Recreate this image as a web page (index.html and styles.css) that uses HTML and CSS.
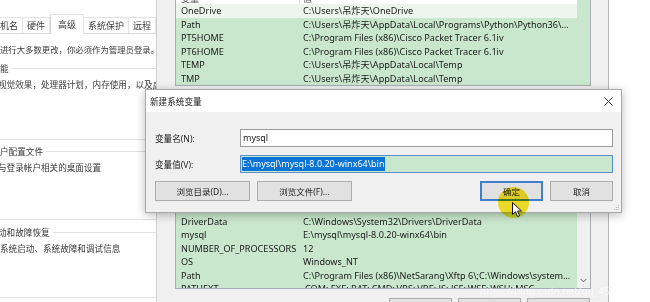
FILE: index.html
```html
<!DOCTYPE html>
<html>
<head>
    <title>新建系统变量</title>
    <link rel="stylesheet" href="styles.css">
</head>
<body>

    <div class="screen">
        <!-- system properties window, advanced tab -->
        <div class="sysprops">
            <div class="tabs">
                <div class="tab tab-first">计算机名</div>
                <div class="tab">硬件</div>
                <div class="tab active">高级</div>
                <div class="tab">系统保护</div>
                <div class="tab">远程</div>
            </div>
            <p class="note">进行大多数更改，你必须作为管理员登录。</p>
            <div class="group-head g1"><span>能</span><i></i></div>
            <p class="desc cut">视觉效果，处理器计划，内存使用，以及虚拟内存</p>
            <div class="group-end e1"></div>
            <div class="group-head g2"><span>户配置文件</span><i></i></div>
            <p class="desc cut">与登录帐户相关的桌面设置</p>
            <div class="group-end e2"></div>
            <div class="group-head g3"><span class="cut">动和故障恢复</span><i></i></div>
            <p class="desc">系统启动、系统故障和调试信息</p>
            <div class="group-end e3"></div>
        </div>

        <!-- environment variables window -->
        <div class="envwin">
            <div class="list list-top">
                <div class="list-head"><span class="name">变量</span><span class="val">值</span></div>
                <div class="row hover"><span class="name">OneDrive</span><span class="val">C:\Users\吊炸天\OneDrive</span></div>
                <div class="row"><span class="name">Path</span><span class="val">C:\Users\吊炸天\AppData\Local\Programs\Python\Python36\Scripts\;C:\Users</span></div>
                <div class="row"><span class="name">PT5HOME</span><span class="val">C:\Program Files (x86)\Cisco Packet Tracer 6.1iv</span></div>
                <div class="row"><span class="name">PT6HOME</span><span class="val">C:\Program Files (x86)\Cisco Packet Tracer 6.1iv</span></div>
                <div class="row"><span class="name">TEMP</span><span class="val">C:\Users\吊炸天\AppData\Local\Temp</span></div>
                <div class="row"><span class="name">TMP</span><span class="val">C:\Users\吊炸天\AppData\Local\Temp</span></div>
            </div>

            <div class="list-gap"></div>

            <div class="list list-bottom">
                <div class="list-body">
                    <div class="list-head"><span class="name">变量</span><span class="val">值</span></div>
                    <div class="row"><span class="name">asl.log</span><span class="val">Destination=file</span></div>
                    <div class="row"><span class="name">CLASSPATH</span><span class="val">.;%JAVA_HOME%\lib</span></div>
                    <div class="row"><span class="name">ComSpec</span><span class="val">C:\Windows\system32\cmd.exe</span></div>
                    <div class="row"><span class="name">configsetroot</span><span class="val">C:\Windows\ConfigSetRoot</span></div>
                    <div class="row"><span class="name">CUDA_PATH</span><span class="val">C:\Program Files\NVIDIA GPU Computing Toolkit</span></div>
                    <div class="row"><span class="name">DriverData</span><span class="val">C:\Windows\System32\Drivers\DriverData</span></div>
                    <div class="row"><span class="name">mysql</span><span class="val">E:\mysql\mysql-8.0.20-winx64\bin</span></div>
                    <div class="row"><span class="name">NUMBER_OF_PROCESSORS</span><span class="val">12</span></div>
                    <div class="row"><span class="name">OS</span><span class="val">Windows_NT</span></div>
                    <div class="row"><span class="name">Path</span><span class="val">C:\Program Files (x86)\NetSarang\Xftp 6\;C:\Windows\system32;C:\Windows</span></div>
                    <div class="row"><span class="name">PATHEXT</span><span class="val">.COM;.EXE;.BAT;.CMD;.VBS;.VBE;.JS;.JSE;.WSF;.WSH;.MSC</span></div>
                </div>
                <div class="scrollbar">
                    <svg width="7" height="5" viewBox="0 0 7 5"><path d="M0.5 0.8 L3.5 3.8 L6.5 0.8" fill="none" stroke="#606060" stroke-width="1"/></svg>
                </div>
            </div>

            <div class="env-actions">
                <button class="btn">新建(W)...</button>
                <button class="btn">编辑(I)...</button>
                <button class="btn">删除(L)</button>
            </div>
        </div>

        <div class="desktop"></div>
    </div>

    <!-- new system variable dialog -->
    <div class="dialog">
        <div class="dlg-title">
            <span>新建系统变量</span>
            <svg class="close" width="9" height="9" viewBox="0 0 9 9"><path d="M0.5 0.5 L8.5 8.5 M8.5 0.5 L0.5 8.5" stroke="#333" stroke-width="1"/></svg>
        </div>
        <div class="dlg-body">
            <div class="field">
                <label>变量名(N):</label>
                <div class="input">mysql</div>
            </div>
            <div class="field">
                <label>变量值(V):</label>
                <div class="input focused"><span class="sel">E:\mysql\mysql-8.0.20-winx64\bin</span></div>
            </div>
            <div class="dlg-actions">
                <button class="btn wide">浏览目录(D)...</button>
                <button class="btn wide">浏览文件(F)...</button>
                <button class="btn small default">确定</button>
                <button class="btn small">取消</button>
            </div>
        </div>
        <svg class="grip" width="7" height="7" viewBox="0 0 7 7"><g fill="#b5b5b5"><rect x="5" y="1" width="1" height="1"/><rect x="3" y="3" width="1" height="1"/><rect x="5" y="3" width="1" height="1"/><rect x="1" y="5" width="1" height="1"/><rect x="3" y="5" width="1" height="1"/><rect x="5" y="5" width="1" height="1"/></g></svg>
    </div>

    <div class="spot"></div>
    <svg class="pointer" width="11" height="16" viewBox="0 0 11 16"><path d="M0.5 0.5 L0.5 12.5 L3.5 9.8 L5.6 14.6 L7.6 13.7 L5.6 9 L9.5 9 Z" fill="#fff" stroke="#111" stroke-width="1" stroke-linejoin="round"/></svg>

    <div class="watermark">https://blog.csdn.net/qq_45074845</div>

</body>
</html>
```

FILE: styles.css
```css
* {
    box-sizing: border-box;
}

body {
    margin: 0;
    width: 650px;
    height: 302px;
    overflow: hidden;
    position: relative;
    background-color: #fff;
    font-family: "Noto Sans", "Noto Sans CJK SC", sans-serif;
    color: #1e1e1e;
}

.screen {
    display: flex;
    height: 302px;
    overflow: hidden;
}

/* left window */

.sysprops {
    width: 157px;
    flex-shrink: 0;
    background-color: #fff;
    border-right: 1px solid #cfcfcf;
    overflow: hidden;
    font-size: 8.6px;
    color: #3a3a3a;
}

.tabs {
    display: flex;
    align-items: flex-end;
    height: 34px;
    border-bottom: 1px solid #dadada;
    font-size: 9px;
}

.tab {
    height: 16px;
    line-height: 16px;
    padding: 0 4px;
    border: 1px solid #e2e2e2;
    border-bottom: none;
    border-left: none;
    white-space: nowrap;
}

.tab-first {
    margin-left: -22px;
}

.tab.active {
    height: 20px;
    line-height: 19px;
    padding: 0 7px;
    margin-bottom: -1px;
    border-left: 1px solid #dadada;
    background-color: #fff;
}

.note {
    margin: 10px 0 0;
    line-height: 12px;
    white-space: nowrap;
    font-size: 8.4px;
}

.desc {
    margin: 5px 0 0;
    line-height: 12px;
    white-space: nowrap;
}

.cut {
    margin-left: -2px;
}

.group-head {
    display: flex;
    align-items: center;
    height: 12px;
    white-space: nowrap;
}

.group-head i {
    flex: 1;
    height: 1px;
    margin-left: 3px;
    background-color: #e0e0e0;
}

.g1 { margin-top: 6px; }
.g2 { margin-top: 5px; }
.g3 { margin-top: 6px; }

.group-end {
    height: 1px;
    background-color: #e0e0e0;
}

.e1 { margin-top: 48px; }
.e2 { margin-top: 45px; }
.e3 { margin-top: 42px; }

/* environment variables window */

.envwin {
    width: 452px;
    flex-shrink: 0;
    display: flex;
    flex-direction: column;
    padding: 0 17px 0 18px;
    background-color: #f0f0f0;
    border-right: 1px solid #b9b9b9;
    overflow: hidden;
}

.desktop {
    flex: 1;
    background-color: #fff;
}

.list {
    border: 1px solid #a9aeb4;
    background-color: #c9e7cc;
    font-size: 9.1px;
    color: #1a1a1a;
    overflow: hidden;
}

.list-top {
    margin-top: -17px;
    flex-shrink: 0;
}

.list-gap {
    height: 40px;
    flex-shrink: 0;
}

.list-bottom {
    height: 163px;
    display: flex;
    flex-shrink: 0;
}

.list-body {
    width: 401px;
    overflow: hidden;
}

.list-head {
    display: flex;
    height: 20px;
    line-height: 30px;
    width: 401px;
    background-color: #fff;
    color: #555;
}

.list-head .name {
    border-right: 1px solid #e5e5e5;
}

.row {
    display: flex;
    width: 401px;
    height: 13.5px;
    line-height: 13.5px;
}

.row.hover {
    background-color: #eef4ee;
}

.name {
    width: 124px;
    flex-shrink: 0;
    padding-left: 5px;
    white-space: nowrap;
}

.val {
    flex: 1;
    min-width: 0;
    padding-left: 3px;
    padding-right: 4px;
    white-space: nowrap;
    overflow: hidden;
    text-overflow: ellipsis;
}

.scrollbar {
    width: 13px;
    background-color: #f0f0f0;
    display: flex;
    align-items: flex-end;
    justify-content: center;
    padding-bottom: 5px;
}

.env-actions {
    display: flex;
    justify-content: flex-end;
    gap: 6px;
    margin-top: 9px;
    padding-right: 1px;
}

.env-actions .btn {
    width: 63px;
    height: 22px;
}

.btn {
    font-family: "Noto Sans", "Noto Sans CJK SC", sans-serif;
    font-size: 8.5px;
    color: #222;
    background-color: #e1e1e1;
    border: 1px solid #adadad;
    padding: 0;
}

/* dialog */

.dialog {
    position: absolute;
    left: 145px;
    top: 89px;
    width: 477px;
    height: 124px;
    background-color: #f0f0f0;
    border: 1px solid #a8a8a8;
    box-shadow: 0 2px 9px rgba(0, 0, 0, 0.28);
    font-size: 8.6px;
    color: #222;
}

.dlg-title {
    display: flex;
    align-items: center;
    justify-content: space-between;
    height: 22px;
    padding: 0 8px 0 4px;
    background-color: #fff;
}

.dlg-body {
    padding: 17px 8px 0 9px;
}

.field {
    display: flex;
    align-items: center;
    height: 18px;
    margin-bottom: 8px;
}

.field label {
    width: 85px;
    flex-shrink: 0;
}

.input {
    flex: 1;
    height: 18px;
    line-height: 16px;
    padding-left: 2px;
    background-color: #fff;
    border: 1px solid #9a9a9a;
    font-size: 9px;
    white-space: nowrap;
    overflow: hidden;
}

.input.focused {
    padding-left: 1px;
    background-color: #c9e7cc;
    border-color: #5a8fce;
}

.sel {
    display: inline-block;
    background-color: #0a74d6;
    color: #fff;
    line-height: 14px;
    padding-right: 1px;
}

.dlg-actions {
    display: flex;
    gap: 7px;
    margin-top: 3px;
}

.dlg-actions .btn {
    height: 20px;
}

.btn.wide {
    width: 95px;
}

.btn.small {
    width: 63px;
}

.btn.default {
    margin-left: auto;
    border: 2px solid #3f7fcb;
}

.grip {
    position: absolute;
    right: 1px;
    bottom: 1px;
}

/* recording overlays */

.spot {
    position: absolute;
    left: 498px;
    top: 187px;
    width: 31px;
    height: 31px;
    border-radius: 50%;
    background-color: rgb(250, 230, 40);
    mix-blend-mode: multiply;
}

.pointer {
    position: absolute;
    left: 512px;
    top: 202px;
}

.watermark {
    position: absolute;
    right: 6px;
    top: 284px;
    font-size: 10px;
    color: rgba(255, 255, 255, 0.55);
}
```
